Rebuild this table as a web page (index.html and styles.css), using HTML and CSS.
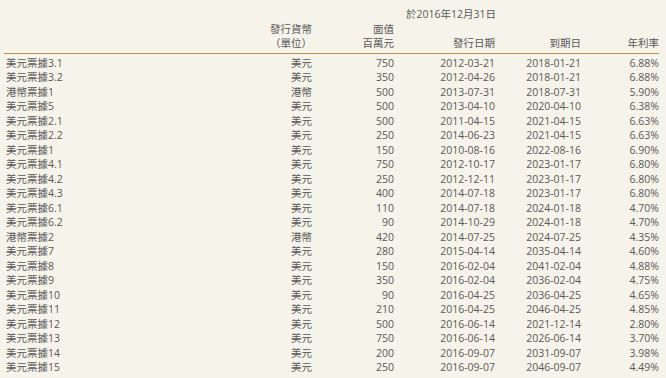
FILE: index.html
```html
<!DOCTYPE html>
<html lang="zh-Hant">
<head>
<meta charset="utf-8">
<link rel="stylesheet" href="styles.css">
</head>
<body>
<div class="sheet">
  <div class="grid head">
    <div class="asof">於2016年12月31日</div>
    <div class="c1"></div>
    <div class="c2 r">發行貨幣</div>
    <div class="c3 r">面值</div>
    <div class="c4"></div><div class="c5"></div><div class="c6"></div>
    <div class="c1"></div>
    <div class="c2 r">（單位）</div>
    <div class="c3 r">百萬元</div>
    <div class="c4 r">發行日期</div>
    <div class="c5 r">到期日</div>
    <div class="c6 r">年利率</div>
  </div>
  <div class="grid body" id="rows"></div>
</div>
<script src="app.js"></script>
</body>
</html>
```
FILE: app.js
```js
const data = [
["美元票據3.1","美元","750","2012-03-21","2018-01-21","6.88%"],
["美元票據3.2","美元","350","2012-04-26","2018-01-21","6.88%"],
["港幣票據1","港幣","500","2013-07-31","2018-07-31","5.90%"],
["美元票據5","美元","500","2013-04-10","2020-04-10","6.38%"],
["美元票據2.1","美元","500","2011-04-15","2021-04-15","6.63%"],
["美元票據2.2","美元","250","2014-06-23","2021-04-15","6.63%"],
["美元票據1","美元","150","2010-08-16","2022-08-16","6.90%"],
["美元票據4.1","美元","750","2012-10-17","2023-01-17","6.80%"],
["美元票據4.2","美元","250","2012-12-11","2023-01-17","6.80%"],
["美元票據4.3","美元","400","2014-07-18","2023-01-17","6.80%"],
["美元票據6.1","美元","110","2014-07-18","2024-01-18","4.70%"],
["美元票據6.2","美元","90","2014-10-29","2024-01-18","4.70%"],
["港幣票據2","港幣","420","2014-07-25","2024-07-25","4.35%"],
["美元票據7","美元","280","2015-04-14","2035-04-14","4.60%"],
["美元票據8","美元","150","2016-02-04","2041-02-04","4.88%"],
["美元票據9","美元","350","2016-02-04","2036-02-04","4.75%"],
["美元票據10","美元","90","2016-04-25","2036-04-25","4.65%"],
["美元票據11","美元","210","2016-04-25","2046-04-25","4.85%"],
["美元票據12","美元","500","2016-06-14","2021-12-14","2.80%"],
["美元票據13","美元","750","2016-06-14","2026-06-14","3.70%"],
["美元票據14","美元","200","2016-09-07","2031-09-07","3.98%"],
["美元票據15","美元","250","2016-09-07","2046-09-07","4.49%"]
];
const rows = document.getElementById("rows");
data.forEach(r => {
  r.forEach((v, i) => {
    const d = document.createElement("div");
    d.className = "c" + (i + 1) + (i > 0 ? " r" : " name");
    d.textContent = v;
    rows.appendChild(d);
  });
});
```
FILE: styles.css
```css
html, body {
  margin: 0;
  padding: 0;
  background: #f6f3eb;
}
body {
  font-family: "Open Sans", "Noto Sans CJK TC", sans-serif;
  font-size: 10.5px;
  line-height: 14.5px;
  color: #595959;
}
.sheet {
  padding: 7px 7px 0 4px;
}
.grid {
  display: grid;
  grid-template-columns: 200px 108px 82px 101px 86px 78px;
}
.head {
  border-bottom: 1px solid #b8924f;
  padding-bottom: 2px;
}
.asof {
  grid-column: 1 / -1;
  padding-left: 402px;
}
.body {
  padding-top: 2px;
}
.r { text-align: right; }
.name { padding-left: 2px; }
```
